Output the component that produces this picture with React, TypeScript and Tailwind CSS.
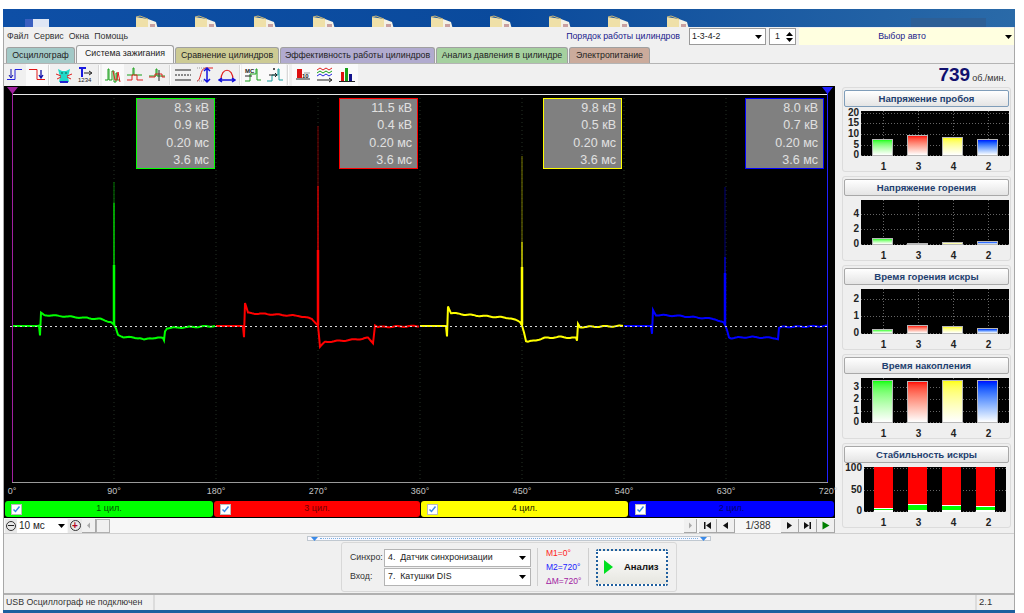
const Caret = ({ cls = 'fill-black' }: { cls?: string }) => (
  <svg width="7" height="4" viewBox="0 0 7 4" className={cls}>
    <path d="M0 0h7L3.500 4z" />
  </svg>
);

const Folder = () => (
  <svg width="26" height="18" viewBox="0 0 26 18" className="shrink-0">
    <path d="M1 2l12 2v14H1z" fill="#efe0a8" />
    <path d="M13 4l8 3 3 11H13z" fill="#f4f1e6" />
    <path d="M15 9h5v5h-5z" fill="#c9a0a0" />
    <path d="M1 2l4-1 8 3" stroke="#cdb878" fill="none" />
  </svg>
);

const icons = [
  <>
    <path d="M9 3.500h7M9 3.500v10M1 13.500h8" stroke="#2222dd" fill="none" />
    <path d="M5 3v8M3 9l2 3 2-3" stroke="#1111aa" fill="none" />
  </>,
  <>
    <path d="M1 3.500h8v10h8" stroke="#e01818" fill="none" />
    <path d="M13 4v8M11 9l2 3 2-3" stroke="#1111aa" strokeWidth="1.300" fill="none" />
  </>,
  <>
    <path d="M3 3l4 2h4l4-2-2 8 1 5H4l1-5z" fill="#20d8c8" />
    <path d="M1 8l5 2M17 8l-5 2M2 13l4-2M16 13l-4-2" stroke="#e02020" fill="none" />
    <path d="M6 7h2M10 7h2" stroke="#0a5a50" />
    <path d="M5 16h8" stroke="#2222cc" strokeWidth="2" />
  </>,
  <>
    <path d="M2 2h7M5 2v9" stroke="#1a1ae0" strokeWidth="2" fill="none" />
    <path d="M7 7h7M12 5l3 2-3 2" stroke="#222" fill="none" />
    <text x="1" y="16" fontSize="6" fontFamily="Liberation Sans, sans-serif" fill="#222">1234</text>
  </>,
  <>
    <path d="M1 14h3V3h1v11h3V5h2v11h2V7h1v7h3" stroke="#18a018" fill="none" />
    <path d="M9 5l2 9h2l1-8 2 10" stroke="#e02020" fill="none" />
  </>,
  <>
    <path d="M1 9h6V2h1v7h8" stroke="#18a018" fill="none" />
    <path d="M1 14h5v-5h5v5h6" stroke="#e02020" fill="none" />
  </>,
  <>
    <path d="M1 10h7V3h1v7h8" stroke="#18a018" fill="none" />
    <path d="M1 11h6v-3h7v3h3" stroke="#e02020" fill="none" />
    <path d="M11 4v11" stroke="#222" />
  </>,
  <>
    <path d="M1 4h16M1 14h16" stroke="#222" />
    <path d="M1 9h16" stroke="#222" strokeDasharray="2 1" />
  </>,
  <>
    <path d="M1 15c4 0 3-12 8-13h8" stroke="#e02020" fill="none" />
    <path d="M1 2h9M1 15h8" stroke="#999" strokeDasharray="1 1" />
    <path d="M11 3v12M8 5l3-3 3 3M8 13l3 3 3-3" stroke="#1111dd" strokeWidth="1.500" fill="none" />
  </>,
  <>
    <path d="M3 14C3 1 15 1 15 14" stroke="#e02020" strokeWidth="1.200" fill="none" />
    <path d="M2 14h14M4 12l-3 2 3 2M14 12l3 2-3 2" stroke="#1111dd" strokeWidth="1.500" fill="none" />
  </>,
  <>
    <path d="M1 15h5V8h6V3h1v11h4" stroke="#18a018" fill="none" />
    <text x="1" y="7" fontSize="6" fontWeight="700" fontFamily="Liberation Sans, sans-serif" fill="#222">MC</text>
    <path d="M1 10h7" stroke="#222" />
  </>,
  <>
    <path d="M1 15h5V9h6V3h1v11h4" stroke="#18a0a0" fill="none" />
    <circle cx="8" cy="3" r="1" fill="#222" />
    <path d="M3 9h8M9 7l2 2-2 2" stroke="#222" fill="none" />
  </>,
  <>
    <path d="M3 3h5v9H3z" fill="#dd1010" />
    <path d="M2 13h14" stroke="#222" />
    <path d="M10 7h6" stroke="#999" />
    <text x="8" y="12" fontSize="6" fontWeight="700" fontFamily="Liberation Sans, sans-serif" fill="#222">10</text>
  </>,
  <>
    <path d="M1 4l3-2 3 2 3-2 3 2 3-2" stroke="#e02020" fill="none" />
    <path d="M1 7l3-2 3 2 3-2 3 2 3-2" stroke="#18a018" fill="none" />
    <path d="M1 10l3-2 3 2 3-2 3 2 3-2" stroke="#2222dd" fill="none" />
    <path d="M1 14h14M13 12l3 2-3 2" stroke="#222" fill="none" />
  </>,
  <>
    <path d="M3 6h3v9H3z" fill="#dd1010" />
    <path d="M7 2h3v13H7z" fill="#18a018" />
    <path d="M11 8h3v7h-3z" fill="#12128c" />
    <path d="M1 15.500h16" stroke="#222" />
  </>,
];

const Btn = ({ i, on = false }: { i: number; on?: boolean }) => (
  <div className={`w-[22px] h-[22px] flex items-center justify-center ${on ? 'bg-[#fafafa]' : ''}`}>
    <svg width="18" height="18" viewBox="0 0 18 18">
      {icons[i]}
    </svg>
  </div>
);

const Sep = () => <div className="w-[2px] h-[20px] bg-[#d8d8d8] border-r border-white" />;

const tabs = [
  { name: 'Осциллограф', w: 'w-[69px]', bg: 'bg-[#a3c9c7]' },
  { name: 'Система зажигания', w: 'w-[98px]', bg: 'bg-[#f7f7f7]', active: true },
  { name: 'Сравнение цилиндров', w: 'w-[104px]', bg: 'bg-[#cdcb94]' },
  { name: 'Эффективность работы цилиндров', w: 'w-[155px]', bg: 'bg-[#b1abcf]' },
  { name: 'Анализ давления в цилиндре', w: 'w-[132px]', bg: 'bg-[#a5d09f]' },
  { name: 'Электропитание', w: 'w-[81px]', bg: 'bg-[#cbab9c]' },
];

type Trace = {
  color: string;
  dark: string;
  pts: number[][];
  spikeX: number;
  bright: number;
  mid: number;
  top: number;
};

const traces: Trace[] = [
  {
    color: '#00ff00',
    dark: '#007a00',
    spikeX: 114,
    bright: 265,
    mid: 203,
    top: 182,
    pts: [[12, 326], [39, 326], [40, 336], [41, 313], [44, 315], [60, 316], [100, 319], [111, 322], [114, 325], [116, 329], [118, 335], [124, 337], [140, 338], [144, 340], [150, 338], [163, 338], [164, 340], [165, 331], [167, 328], [216, 326]],
  },
  {
    color: '#ff0000',
    dark: '#7a0000',
    spikeX: 318,
    bright: 250,
    mid: 186,
    top: 126,
    pts: [[216, 326], [243, 326], [244, 337], [245, 303], [248, 313], [265, 314], [300, 316], [312, 319], [318, 325], [319, 336], [320, 347], [325, 342], [350, 340], [368, 338], [373, 343], [375, 325], [378, 327], [420, 326]],
  },
  {
    color: '#ffff00',
    dark: '#7a7a00',
    spikeX: 522,
    bright: 267,
    mid: 242,
    top: 156,
    pts: [[420, 326], [446, 326], [447, 336], [448, 306], [451, 313], [470, 315], [510, 318], [520, 322], [522, 325], [524, 332], [526, 341], [528, 342], [545, 338], [560, 337], [576, 338], [577, 341], [578, 324], [580, 327], [624, 326]],
  },
  {
    color: '#0000ff',
    dark: '#00007a',
    spikeX: 725,
    bright: 273,
    mid: 257,
    top: 187,
    pts: [[624, 326], [651, 326], [652, 334], [653, 310], [656, 315], [680, 316], [715, 319], [724, 323], [727, 330], [729, 337], [731, 338], [750, 337], [775, 338], [778, 339], [779, 328], [782, 327], [828, 326]],
  },
];

// stepwise interpolation with a small fixed jitter so the trace looks sampled
const tracePath = (pts: number[][]) => {
  let d = '';
  for (let s = 0; s < pts.length - 1; s++) {
    const [x1, y1] = pts[s];
    const [x2, y2] = pts[s + 1];
    const n = Math.max(1, Math.round(x2 - x1));
    for (let k = 0; k < n; k++) {
      const x = x1 + ((x2 - x1) * k) / n;
      const y = y1 + ((y2 - y1) * k) / n;
      const flat = y1 === 326 && y2 === 326;
      const j = flat ? 0 : Math.sin(x * 12.9898) * 0.5;
      d += `${d ? 'L' : 'M'}${x.toFixed(1)} ${(y + j).toFixed(1)}`;
    }
  }
  return d;
};

const readouts = [
  { v: ['8.3 кВ', '0.9 кВ', '0.20 мс', '3.6 мс'], border: 'border-[#00ff00]', pos: 'left-[132px]' },
  { v: ['11.5 кВ', '0.4 кВ', '0.20 мс', '3.6 мс'], border: 'border-[#ff0000]', pos: 'left-[335px]' },
  { v: ['9.8 кВ', '0.5 кВ', '0.20 мс', '3.6 мс'], border: 'border-[#ffff00]', pos: 'left-[539px]' },
  { v: ['8.0 кВ', '0.7 кВ', '0.20 мс', '3.6 мс'], border: 'border-[#0000ff]', pos: 'left-[741px]' },
];

const Scope = () => (
  <div className="relative h-[432px] bg-black flex flex-col">
    <div className="relative h-[397px]">
      <svg className="absolute left-0 top-0" width="831" height="397" viewBox="4 86 831 397">
        {[114, 216, 318, 420, 522, 624, 726].map((x) => (
          <path key={x} d={`M${x} 94V482`} stroke="#243024" strokeDasharray="1 3" />
        ))}
        <path d="M12 94.500H828" stroke="#e8e8e8" />
        <path d="M12 482.500H828" stroke="#9a9a9a" />
        {traces.map((t) => (
          <g key={t.color}>
            <path d={`M${t.spikeX} 325V${t.top}`} stroke={t.dark} fill="none" />
            <path d={`M${t.spikeX} 325V${t.mid}`} stroke={t.color} fill="none" />
            <path d={`M${t.spikeX} 325V${t.bright}`} stroke={t.color} strokeWidth="2.500" fill="none" />
            <path d={tracePath(t.pts)} stroke={t.color} strokeWidth="2" fill="none" />
          </g>
        ))}
        <path d="M10 326.500H828" stroke="#d8d8d8" strokeDasharray="2 3" />
        <path d="M12.500 90V482" stroke="#a020a0" />
        <path d="M827.500 90V482" stroke="#2020ff" />
        <path d="M7 87h11l-5.500 7z" fill="#a020a0" />
        <path d="M822 87h11l-5.500 7z" fill="#2020ff" />
      </svg>
      {readouts.map((r) => (
        <div
          key={r.pos}
          className={`absolute top-[12px] ${r.pos} w-[79px] h-[71px] bg-[#808080] border ${r.border} flex flex-col pt-[1px] pr-[5px] text-right text-[12.500px] leading-[17.300px] text-[#e0e0e0]`}
        >
          {r.v.map((x, i) => (
            <div key={i}>{x}</div>
          ))}
        </div>
      ))}
    </div>
    <div className="h-[18px] flex items-center -ml-[43px] text-[9px] text-[#c4c4c4]">
      {['0°', '90°', '180°', '270°', '360°', '450°', '540°', '630°', '720°'].map((d) => (
        <span key={d} className="w-[102px] shrink-0 text-center">
          {d}
        </span>
      ))}
    </div>
    <div className="flex-1 flex pl-[1px] gap-[1px] pb-[1px]">
      {[
        { n: '1 цил.', c: 'bg-[#00ff00] text-[#005000]', w: 'w-[208px]' },
        { n: '3 цил.', c: 'bg-[#ff0000] text-[#700000]', w: 'w-[206px]' },
        { n: '4 цил.', c: 'bg-[#ffff00] text-[#202000]', w: 'w-[207px]' },
        { n: '2 цил.', c: 'bg-[#0000ff] text-[#000070]', w: 'w-[205px]' },
      ].map((ch) => (
        <div key={ch.n} className={`${ch.w} ${ch.c} rounded-[3px] flex items-center relative text-[9px]`}>
          <div className="absolute left-[6px] w-[11px] h-[11px] bg-white border border-[#bbbbbb] flex items-center justify-center">
            <svg width="9" height="9" viewBox="0 0 9 9">
              <path d="M1.500 4.500l2 2 4-5" stroke="#3a8ae8" strokeWidth="1.500" fill="none" />
            </svg>
          </div>
          <span className="w-full text-center">{ch.n}</span>
        </div>
      ))}
    </div>
  </div>
);

const NavBtn = ({ d, fill = '#111111', w = 'w-[18px]' }: { d: string; fill?: string; w?: string }) => (
  <div className={`${w} h-[14px] bg-[#f0f0f0] border-r border-b border-[#a8a8a8] flex items-center justify-center`}>
    <svg width="11" height="9" viewBox="0 0 11 9">
      <path d={d} fill={fill} />
    </svg>
  </div>
);

const Controls = () => (
  <div className="h-[15px] flex items-center pl-[1px] text-[10px] text-[#222222] bg-[#f7f7f7]">
    <div className="w-[12px] h-[14px] flex items-center justify-center bg-[#e8e8e8]">
      <div className="w-[10px] h-[10px] rounded-full border border-[#333333] flex items-center justify-center">
        <div className="w-[6px] h-[1px] bg-[#222222]" />
      </div>
    </div>
    <div className="w-[50px] h-[14px] bg-white flex items-center justify-between px-[2px] leading-none">
      <span>10 мс</span>
      <Caret />
    </div>
    <div className="w-[14px] h-[14px] flex items-center justify-center bg-[#e8e8e8] ml-[1px]">
      <div className="w-[11px] h-[11px] rounded-full border border-[#333333] flex items-center justify-center text-[#b00020] text-[10px] font-bold leading-none">
        +
      </div>
    </div>
    <NavBtn d="M7 1.500v6L4 4.500z" fill="#aaaaaa" w="w-[14px]" />
    <div className="w-[14px] h-[14px] bg-[#f0f0f0] border border-[#b0b0b0]" />
    <div className="flex-1" />
    <NavBtn d="M4 1.500v6l3-3z" fill="#aaaaaa" w="w-[13px]" />
    <div className="w-[2px]" />
    <NavBtn d="M2 1h1.500v7H2zM9 1v7L4 4.500z" />
    <NavBtn d="M8 1v7L3 4.500z" />
    <div className="w-[46px] text-center text-[#333333]">1/388</div>
    <NavBtn d="M3 1v7l5-3.500z" />
    <NavBtn d="M2 1v7l5-3.500zM7.500 1H9v7H7.500z" />
    <NavBtn d="M2.500 0.500v8l7-4z" fill="#008000" />
  </div>
);

type Bar = { h: number; stable?: number };

const MiniChart = ({
  title,
  labels,
  ticks,
  bars,
  focus = false,
  stable = false,
}: {
  title: string;
  labels: string[];
  ticks: number[];
  bars: Bar[];
  focus?: boolean;
  stable?: boolean;
}) => {
  const colors = ['from-[#00ff00]', 'from-[#ff0000]', 'from-[#ffff00]', 'from-[#0000ff]'];
  const names = ['1', '3', '4', '2'];
  return (
    <div className="h-[85px] rounded-[3px] border border-[#dcdcdc] bg-[#efefef] px-[1px] pt-[2px]">
      <div
        className={`h-[17px] rounded-[2px] border ${focus ? 'border-[#7f9db9]' : 'border-[#a8a8a8]'} bg-gradient-to-b from-white to-[#e4e4e4] text-center text-[9.600px] font-bold leading-[15px] text-[#1f3f6f]`}
      >
        {title}
      </div>
      <div className="mt-[4px] flex">
        <div className={`relative ${stable ? 'w-[20px]' : 'w-[17px]'} h-[45px] text-[10px] font-bold text-[#222222] leading-none`}>
          {labels.map((l, i) => (
            <div key={l} className="absolute right-[2px] -translate-y-1/2" style={{ top: ticks[i] }}>
              {l}
            </div>
          ))}
        </div>
        <div
          className={`relative h-[45px] bg-black flex items-end ${
            stable ? 'w-[142px] pl-[10px] gap-[15px]' : 'w-[148px] pl-[11px] gap-[14px]'
          }`}
        >
          <svg className="absolute left-0 top-0" width="148" height="45">
            {ticks.map((t) => (
              <path key={t} d={`M0 ${t + 0.5}H${stable ? 142 : 148}`} stroke="#666666" strokeDasharray="1 2" />
            ))}
            {[22, 57, 92, 127].map((x) => (
              <path key={x} d={`M${x + 0.5} 0V45`} stroke="#666666" strokeDasharray="1 2" />
            ))}
          </svg>
          {bars.map((b, i) =>
            stable ? (
              <div key={i} className="relative w-[19px] h-[45px] flex flex-col bg-white">
                <div className="bg-[#ff0000]" style={{ height: 44 - (b.stable ?? 0) }} />
                <div className="mt-[1px] bg-[#00ff00]" style={{ height: (b.stable ?? 0) - 2 }} />
              </div>
            ) : (
              <div
                key={i}
                className={`relative w-[21px] border border-[#b8b8b8] bg-gradient-to-b ${colors[i]} to-white`}
                style={{ height: b.h }}
              />
            ),
          )}
        </div>
      </div>
      <div className="flex pl-[29px] gap-[14px] text-[10px] font-bold text-[#222222] leading-[10px] pt-[6px]">
        {names.map((n) => (
          <div key={n} className="w-[21px] text-center">
            {n}
          </div>
        ))}
      </div>
    </div>
  );
};

const SideSelect = ({ text }: { text: string }) => (
  <div className="w-[147px] h-[18px] bg-white border border-[#b4b4b4] flex items-center justify-between pl-[3px] pr-[4px] text-[8.800px] text-[#222222]">
    <span className="whitespace-pre">{text}</span>
    <Caret />
  </div>
);

export default function App() {
  return (
    <div className="w-[1024px] h-[613px] overflow-hidden bg-white pt-[9px] pl-[3px] pr-[9px] font-['Liberation_Sans',sans-serif]">
      <div className="h-[18px] overflow-hidden flex items-start bg-gradient-to-r from-[#0e4fa6] via-[#0a4a9c] to-[#2a6aa8]">
        <div className="ml-[22px] mt-[10px] w-[24px] h-[8px] bg-[#dfe6f4] border-l-[8px] border-[#3a5fc0] shrink-0" />
        <div className="ml-[86px] mt-[6px] flex gap-[33px]">
          {Array.from({ length: 10 }).map((_, i) => (
            <Folder key={i} />
          ))}
        </div>
        <div className="ml-auto mr-[29px] mt-[9px] w-[75px] h-[9px] bg-[#2d5f96] shrink-0" />
      </div>
      <div className="h-[583px] flex flex-col bg-[#f0f0f0] border-x border-[#a8a8a8] text-[#222222]">
        <div className="h-[19px] shrink-0 flex items-center text-[8.800px]">
          <div className="flex gap-[5px] pl-[3px] text-[#333333]">
            <span>Файл</span>
            <span>Сервис</span>
            <span>Окна</span>
            <span>Помощь</span>
          </div>
          <span className="ml-auto text-[#1a1a8c]">Порядок работы цилиндров</span>
          <div className="ml-[9px] w-[77px] h-[17px] bg-white border border-[#9a9a9a] flex items-center justify-between pl-[2px] pr-[3px]">
            <span>1-3-4-2</span>
            <Caret />
          </div>
          <div className="ml-[3px] w-[27px] h-[17px] bg-white border border-[#9a9a9a] flex items-center justify-between pl-[5px] pr-[2px]">
            <span>1</span>
            <div className="flex flex-col gap-[2px]">
              <Caret cls="fill-black rotate-180" />
              <Caret />
            </div>
          </div>
          <div className="ml-[3px] w-[215px] h-[17px] bg-[#ffffe0] flex items-center pr-[2px]">
            <span className="flex-1 text-center text-[#1a1a8c]">Выбор авто</span>
            <Caret />
          </div>
        </div>
        <div className="h-[17px] shrink-0 flex items-end pl-[2px] gap-[1px] text-[8.800px]">
          {tabs.map((t) => (
            <div
              key={t.name}
              className={`${t.w} ${t.bg} ${t.active ? 'h-[18px] pb-[1px]' : 'h-[16px]'} rounded-t-[3px] border border-b-0 border-[#a0a0a0] flex items-center justify-center whitespace-nowrap`}
            >
              {t.name}
            </div>
          ))}
        </div>
        <div className="h-[23px] shrink-0 flex items-center border-t border-[#b4b4b4]">
          <Btn i={0} />
          <Btn i={1} on />
          <Sep />
          <div className="w-[3px]" />
          <Btn i={2} />
          <Btn i={3} />
          <div className="w-[1px]" />
          <Sep />
          <div className="w-[2px]" />
          <Btn i={4} on />
          <Btn i={5} />
          <Btn i={6} />
          <div className="w-[1px]" />
          <Sep />
          <div className="w-[1px]" />
          <Btn i={7} />
          <Btn i={8} />
          <Btn i={9} />
          <div className="w-[1px]" />
          <Sep />
          <div className="w-[1px]" />
          <Btn i={10} on />
          <Btn i={11} on />
          <div className="w-[1px]" />
          <Sep />
          <div className="w-[3px]" />
          <Btn i={12} on />
          <Btn i={13} on />
          <Btn i={14} on />
          <div className="ml-auto mr-[8px] flex items-baseline gap-[2px] text-[#333333]">
            <span className="text-[19px] font-bold text-[#10106e] leading-none">739</span>
            <span className="text-[9px]">об./мин.</span>
          </div>
        </div>
        <div className="h-[447px] shrink-0 flex">
          <div className="w-[831px]">
            <Scope />
            <Controls />
          </div>
          <div className="ml-[7px] w-[169px] pt-[1px] flex flex-col gap-[4px]">
            <MiniChart
              title="Напряжение пробоя"
              focus
              labels={['20', '15', '10', '5', '0']}
              ticks={[2, 12, 23, 34, 44]}
              bars={[{ h: 17 }, { h: 21 }, { h: 19 }, { h: 17 }]}
            />
            <MiniChart
              title="Напряжение горения"
              labels={['4', '2', '0']}
              ticks={[14, 29, 44]}
              bars={[{ h: 7 }, { h: 2 }, { h: 3 }, { h: 4 }]}
            />
            <MiniChart
              title="Время горения искры"
              labels={['2', '1', '0']}
              ticks={[10, 27, 44]}
              bars={[{ h: 5 }, { h: 9 }, { h: 8 }, { h: 6 }]}
            />
            <MiniChart
              title="Время накопления"
              labels={['3', '2', '1', '0']}
              ticks={[9, 21, 33, 44]}
              bars={[{ h: 43 }, { h: 42 }, { h: 43 }, { h: 43 }]}
            />
            <MiniChart
              title="Стабильность искры"
              stable
              labels={['100', '50', '0']}
              ticks={[1, 23, 44]}
              bars={[
                { h: 45, stable: 3 },
                { h: 45, stable: 7 },
                { h: 45, stable: 6 },
                { h: 45, stable: 5 },
              ]}
            />
          </div>
        </div>
        <div className="h-[62px] shrink-0 border-t border-[#d0d0d0] border-b-2 border-b-[#b0b0b0] flex flex-col items-center">
          <div className="mt-[2px] w-[404px] h-[5px] bg-[#f8f8ff] border border-[#c0c8d0] flex items-center justify-between px-[3px]">
            <Caret cls="fill-[#3a8ae8]" />
            <div className="flex-1 mx-[2px] border-t border-dotted border-[#7ab0e0]" />
            <Caret cls="fill-[#3a8ae8]" />
          </div>
          <div className="mt-[1px] w-[336px] h-[50px] rounded-[3px] border border-[#d8d8d8] flex items-center text-[8.800px]">
            <div className="w-[195px] flex flex-col gap-[1px] pl-[8px]">
              <div className="flex items-center">
                <span className="w-[34px] text-[#333333]">Синхро:</span>
                <SideSelect text="4.  Датчик синхронизации" />
              </div>
              <div className="flex items-center">
                <span className="w-[34px] text-[#333333]">Вход:</span>
                <SideSelect text="7.  Катушки DIS" />
              </div>
            </div>
            <div className="h-[38px] border-l border-[#cfcfcf] flex flex-col justify-center gap-[2px] pl-[8px] w-[51px] leading-[12px] text-[8.500px]">
              <span className="text-[#ff2020]">M1=0°</span>
              <span className="text-[#2020ff]">M2=720°</span>
              <span className="text-[#a020a0]">ΔM=720°</span>
            </div>
            <div className="h-[38px] border-l border-[#cfcfcf] pl-[7px] flex items-center">
              <div className="w-[72px] h-[37px] rounded-[2px] border-2 border-dotted border-[#1f5f9f] bg-gradient-to-b from-white to-[#e6e6e0] flex items-center pl-[6px] gap-[11px]">
                <svg width="9" height="14" viewBox="0 0 9 14">
                  <path d="M0 0l9 7-9 7z" fill="#00e020" />
                </svg>
                <span className="text-[9.500px] font-bold text-[#111111]">Анализ</span>
              </div>
            </div>
          </div>
        </div>
        <div className="flex-1 flex text-[8.800px] text-[#333333]">
          <div className="w-[151px] pl-[2px] flex items-center whitespace-nowrap border-r-2 border-[#dcdcdc]">USB Осциллограф не подключен</div>
          <div className="flex-1 border-r-2 border-[#dcdcdc]" />
          <div className="w-[37px] pl-[2px] flex items-center text-[9.500px]">2.1</div>
        </div>
      </div>
      <div className="h-[3px] bg-[#1d5f9e]" />
    </div>
  );
}
